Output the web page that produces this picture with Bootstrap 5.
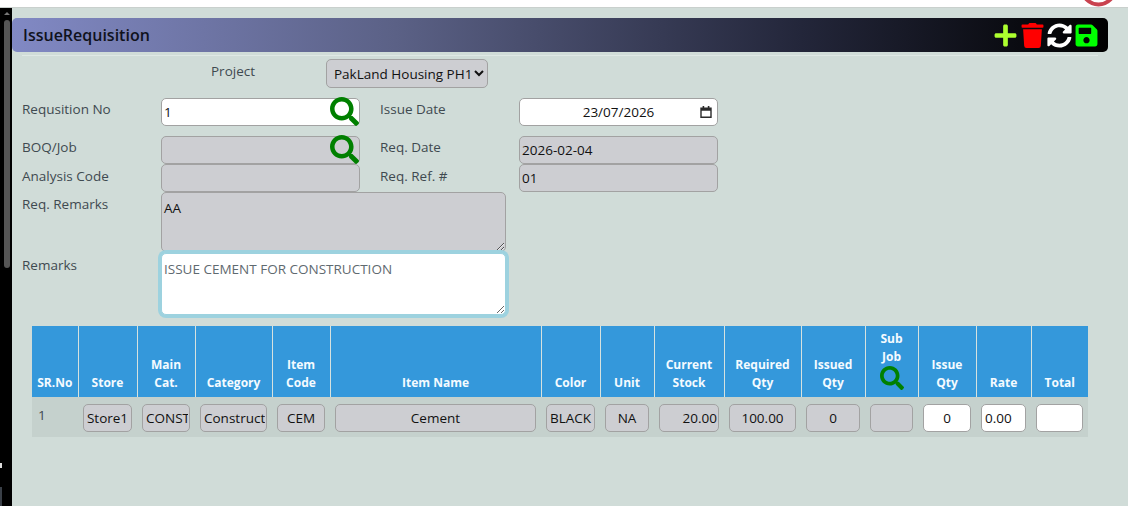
<!DOCTYPE html>
<html lang="en">
<head>
    <meta charset="UTF-8">
    <meta name="viewport" content="width=device-width, initial-scale=1.0">
    <title>Issue Requisition</title>
    <link href="https://cdn.jsdelivr.net/npm/bootstrap@5.3.0/dist/css/bootstrap.min.css" rel="stylesheet">
    <style>
        html, body {
            height: 100%;
            overflow: hidden;
        }
        body {
            font-family: "Open Sans", "Noto Sans", sans-serif;
            font-size: 13.5px;
            background: #d0dcd8;
            color: #3f4a50;
        }
        .top-strip {
            height: 8px;
            background: #fff;
            border-bottom: 1px solid #c9d0cd;
            position: relative;
        }
        .top-logo {
            position: absolute;
            left: 1080px;
            top: 0;
            width: 38px;
            height: 7px;
        }
        .page-wrap {
            height: 498px;
        }
        .side-strip {
            width: 12px;
            flex: none;
            background: #000;
            position: relative;
        }
        .side-thumb {
            position: absolute;
            left: 4px;
            top: 12px;
            width: 6px;
            height: 248px;
            border-radius: 3px;
            background: #555;
        }
        .side-arrow {
            position: absolute;
            left: 4px;
            top: 4px;
            border: 3px solid transparent;
            border-top: 0;
            border-bottom: 3px solid #777;
        }
        .side-foot {
            position: absolute;
            left: 0;
            bottom: 0;
            width: 2px;
            height: 19px;
            background: #3a4048;
        }
        .side-mark {
            position: absolute;
            left: 0;
            top: 455px;
            width: 2px;
            height: 5px;
            background: #ddd;
        }
        .main-area {
            flex: 1;
            min-width: 0;
        }
        .title-bar {
            margin: 10px 20px 0 0;
            height: 34px;
            padding: 0 9px 0 11px;
            background: linear-gradient(90deg, #8189c4 0%, #5b6186 35%, #23263a 72%, #000 100%);
            border-radius: 5px;
        }
        .title-text {
            font-size: 16px;
            font-weight: 600;
            color: #10121c;
        }
        .title-rule {
            height: 1px;
            margin: 3px 30px 0 10px;
            background: #dfe8e5;
        }
        .tool-set {
            gap: 2px;
        }
        .tool-set svg {
            display: block;
            width: 25px;
            height: 25px;
        }
        .form-area {
            padding: 3px 0 0 10px;
        }
        .field-row {
            display: flex;
        }
        .row-project {
            height: 39px;
        }
        .row-req {
            height: 38px;
        }
        .row-boq {
            height: 28px;
        }
        .row-code {
            height: 28px;
        }
        .row-remark {
            height: 61px;
        }
        .lbl-first {
            width: 139px;
            flex: none;
            padding-top: 2px;
        }
        .lbl-second {
            width: 139px;
            margin-left: 20px;
            flex: none;
            padding-top: 2px;
        }
        .row-req .lbl-first, .row-req .lbl-second, .row-boq .lbl-first, .row-boq .lbl-second {
            padding-top: 1px;
        }
        .lbl-project {
            width: 115px;
            margin-left: 189px;
            flex: none;
            padding-top: 2px;
        }
        .box-wrap {
            position: relative;
            width: 199px;
            flex: none;
        }
        .fld {
            display: block;
            width: 199px;
            height: 28px;
            padding: 0 2px;
            font-size: 13.5px;
            color: #111;
            background: #cdced2;
            border: 1px solid #a2a2a2;
            border-radius: 5px;
            font-family: inherit;
            outline: none;
        }
        .fld-white {
            background: #fff;
        }
        .fld-date {
            text-align: center;
        }
        .fld-select {
            width: 162px;
            height: 29px;
            padding: 0 0 0 3px;
        }
        .fld-area {
            width: 345px;
            height: 60px;
            padding: 5px 2px 2px;
            margin: 0;
            resize: vertical;
        }
        .fld-focus {
            height: 62px;
            background: #fff;
            color: #5f6a70;
            border-color: #9dd2df;
            box-shadow: 0 0 0 3px #9dd2df;
        }
        .look-up {
            position: absolute;
            right: 1px;
            top: -1px;
            width: 29px;
            height: 29px;
        }
        .date-icon {
            position: absolute;
            right: 6px;
            top: 8px;
            width: 12px;
            height: 12px;
        }
        .grid-wrap {
            margin: 11px 0 0 20px;
            width: 1056px;
        }
        .req-table {
            width: 1056px;
            table-layout: fixed;
            border-collapse: collapse;
            margin: 0;
        }
        .wd-46 { width: 46px; }
        .wd-53 { width: 53px; }
        .wd-54 { width: 54px; }
        .wd-55 { width: 55px; }
        .wd-57 { width: 57px; }
        .wd-58 { width: 58px; }
        .wd-59 { width: 59px; }
        .wd-64 { width: 64px; }
        .wd-70 { width: 70px; }
        .wd-77 { width: 77px; }
        .wd-211 { width: 211px; }
        .req-table th {
            background: #3498db;
            color: #f4fbff;
            font-size: 12px;
            line-height: 18px;
            font-weight: 700;
            text-align: center;
            vertical-align: bottom;
            padding: 4px 0 5px;
            border-left: 1px solid #d6e2df;
            height: 70px;
            overflow: hidden;
        }
        .req-table th:first-child {
            border-left: 0;
        }
        .req-table td {
            background: #c5d1cd;
            height: 40px;
            padding: 7px 5px 0;
            vertical-align: top;
            color: #3f4a50;
        }
        .req-table td:first-child {
            padding: 8px 0 0 6px;
        }
        .cell-fld {
            width: 100%;
            padding: 0 1px;
            text-align: center;
        }
        .cell-end {
            text-align: right;
        }
        .cell-start {
            text-align: left;
            padding-left: 3px;
        }
        .cell-clip {
            padding-right: 7px;
        }
        .sub-look {
            display: block;
            width: 24px;
            height: 24px;
            margin: 0 auto 2px;
        }
    </style>
</head>
<body>
    <div class="top-strip">
        <svg class="top-logo" viewBox="0 0 38 7"><circle cx="18.5" cy="-12" r="16.5" fill="#fff" stroke="#c9434f" stroke-width="4"/></svg>
    </div>
    <div class="page-wrap d-flex">
        <div class="side-strip">
            <span class="side-arrow"></span>
            <span class="side-thumb"></span>
            <span class="side-mark"></span>
            <span class="side-foot"></span>
        </div>
        <div class="main-area">
            <div class="title-bar d-flex align-items-center justify-content-between">
                <span class="title-text">IssueRequisition</span>
                <div class="tool-set d-flex align-items-center">
                    <svg viewBox="0 0 448 512"><path fill="#adff2f" d="M416 208H272V64c0-17.67-14.33-32-32-32h-32c-17.67 0-32 14.33-32 32v144H32c-17.67 0-32 14.33-32 32v32c0 17.67 14.33 32 32 32h144v144c0 17.67 14.33 32 32 32h32c17.67 0 32-14.33 32-32V304h144c17.67 0 32-14.33 32-32v-32c0-17.67-14.33-32-32-32z"/></svg>
                    <svg viewBox="0 0 448 512"><path fill="#ff0000" d="M432 32H312l-9.4-18.7A24 24 0 0 0 281.1 0H166.8a23.72 23.72 0 0 0-21.4 13.3L136 32H16A16 16 0 0 0 0 48v32a16 16 0 0 0 16 16h416a16 16 0 0 0 16-16V48a16 16 0 0 0-16-16zM53.2 467a48 48 0 0 0 47.9 45h245.8a48 48 0 0 0 47.9-45L416 128H32z"/></svg>
                    <svg viewBox="0 0 512 512"><path fill="#fff" d="M370.72 133.28C339.458 104.008 298.888 87.962 255.848 88c-77.458.068-144.328 53.178-162.791 126.85-1.344 5.363-6.122 9.15-11.651 9.15H24.103c-7.498 0-13.194-6.807-11.807-14.176C33.933 94.924 134.813 8 256 8c66.448 0 126.791 26.136 171.315 68.685L463.03 40.97C478.149 25.851 504 36.559 504 57.941V192c0 13.255-10.745 24-24 24H345.941c-21.382 0-32.09-25.851-16.971-40.971l41.75-41.749zM32 296h134.059c21.382 0 32.09 25.851 16.971 40.971l-41.75 41.75c31.262 29.273 71.835 45.319 114.876 45.28 77.418-.07 144.315-53.144 162.787-126.849 1.344-5.363 6.122-9.15 11.651-9.15h57.304c7.498 0 13.194 6.807 11.807 14.176C478.067 417.076 377.187 504 256 504c-66.448 0-126.791-26.136-171.315-68.685L48.97 471.03C33.851 486.149 8 475.441 8 454.059V320c0-13.255 10.745-24 24-24z"/></svg>
                    <svg viewBox="0 0 448 512"><path fill="#00ff00" d="M433.941 129.941l-83.882-83.882A48 48 0 0 0 316.118 32H48C21.49 32 0 53.49 0 80v352c0 26.51 21.49 48 48 48h352c26.51 0 48-21.49 48-48V163.882a48 48 0 0 0-14.059-33.941zM224 416c-35.346 0-64-28.654-64-64 0-35.346 28.654-64 64-64s64 28.654 64 64c0 35.346-28.654 64-64 64zm96-304.52V212c0 6.627-5.373 12-12 12H76c-6.627 0-12-5.373-12-12V108c0-6.627 5.373-12 12-12h228.52c3.183 0 6.235 1.264 8.485 3.515l3.48 3.48A11.996 11.996 0 0 1 320 111.48z"/></svg>
                </div>
            </div>
            <div class="title-rule"></div>

            <div class="form-area">
                <div class="field-row row-project">
                    <div class="lbl-project">Project</div>
                    <select class="fld fld-select"><option>PakLand Housing PH1</option></select>
                </div>
                <div class="field-row row-req">
                    <div class="lbl-first">Requsition No</div>
                    <div class="box-wrap">
                        <input class="fld fld-white" type="text" value="1">
                        <svg class="look-up" viewBox="0 0 512 512"><path fill="#008000" d="M505 442.7L405.3 343c-4.5-4.5-10.6-7-17-7H372c27.6-35.3 44-79.7 44-128C416 93.1 322.9 0 208 0S0 93.1 0 208s93.1 208 208 208c48.3 0 92.7-16.4 128-44v16.3c0 6.4 2.5 12.5 7 17l99.7 99.7c9.4 9.4 24.6 9.4 33.9 0l28.3-28.3c9.4-9.4 9.4-24.6.1-34zM208 336c-70.7 0-128-57.2-128-128 0-70.7 57.2-128 128-128 70.7 0 128 57.2 128 128 0 70.7-57.2 128-128 128z"/></svg>
                    </div>
                    <div class="lbl-second">Issue Date</div>
                    <div class="box-wrap">
                        <input class="fld fld-white fld-date" type="text" value="23/07/2026">
                        <svg class="date-icon" viewBox="0 0 12 12"><path fill="none" stroke="#2b2b2b" stroke-width="1.4" d="M1 2.2h10v9H1z"/><path fill="#2b2b2b" d="M1 2h10v2.8H1zM2.6 0h1.6v2H2.6zM7.8 0h1.6v2H7.8z"/></svg>
                    </div>
                </div>
                <div class="field-row row-boq">
                    <div class="lbl-first">BOQ/Job</div>
                    <div class="box-wrap">
                        <input class="fld" type="text" disabled>
                        <svg class="look-up" viewBox="0 0 512 512"><path fill="#008000" d="M505 442.7L405.3 343c-4.5-4.5-10.6-7-17-7H372c27.6-35.3 44-79.7 44-128C416 93.1 322.9 0 208 0S0 93.1 0 208s93.1 208 208 208c48.3 0 92.7-16.4 128-44v16.3c0 6.4 2.5 12.5 7 17l99.7 99.7c9.4 9.4 24.6 9.4 33.9 0l28.3-28.3c9.4-9.4 9.4-24.6.1-34zM208 336c-70.7 0-128-57.2-128-128 0-70.7 57.2-128 128-128 70.7 0 128 57.2 128 128 0 70.7-57.2 128-128 128z"/></svg>
                    </div>
                    <div class="lbl-second">Req. Date</div>
                    <input class="fld" type="text" value="2026-02-04" readonly>
                </div>
                <div class="field-row row-code">
                    <div class="lbl-first">Analysis Code</div>
                    <div class="box-wrap"><input class="fld" type="text" readonly></div>
                    <div class="lbl-second">Req. Ref. #</div>
                    <input class="fld" type="text" value="01" readonly>
                </div>
                <div class="field-row row-remark">
                    <div class="lbl-first">Req. Remarks</div>
                    <textarea class="fld fld-area" readonly>AA</textarea>
                </div>
                <div class="field-row">
                    <div class="lbl-first">Remarks</div>
                    <textarea class="fld fld-area fld-focus">ISSUE CEMENT FOR CONSTRUCTION</textarea>
                </div>
            </div>

            <div class="grid-wrap">
                <table class="req-table">
                    <colgroup>
                        <col class="wd-46"><col class="wd-59"><col class="wd-58"><col class="wd-77"><col class="wd-58"><col class="wd-211"><col class="wd-59"><col class="wd-54"><col class="wd-70"><col class="wd-77"><col class="wd-64"><col class="wd-53"><col class="wd-58"><col class="wd-55"><col class="wd-57">
                    </colgroup>
                    <thead>
                        <tr>
                            <th>SR.No</th><th>Store</th><th>Main<br>Cat.</th><th>Category</th><th>Item<br>Code</th><th>Item Name</th><th>Color</th><th>Unit</th><th>Current<br>Stock</th><th>Required<br>Qty</th><th>Issued<br>Qty</th>
                            <th>Sub<br>Job<svg class="sub-look" viewBox="0 0 512 512"><path fill="#008000" d="M505 442.7L405.3 343c-4.5-4.5-10.6-7-17-7H372c27.6-35.3 44-79.7 44-128C416 93.1 322.9 0 208 0S0 93.1 0 208s93.1 208 208 208c48.3 0 92.7-16.4 128-44v16.3c0 6.4 2.5 12.5 7 17l99.7 99.7c9.4 9.4 24.6 9.4 33.9 0l28.3-28.3c9.4-9.4 9.4-24.6.1-34zM208 336c-70.7 0-128-57.2-128-128 0-70.7 57.2-128 128-128 70.7 0 128 57.2 128 128 0 70.7-57.2 128-128 128z"/></svg></th>
                            <th>Issue<br>Qty</th><th>Rate</th><th>Total</th>
                        </tr>
                    </thead>
                    <tbody>
                        <tr>
                            <td>1</td>
                            <td><input class="fld cell-fld" value="Store1" readonly></td>
                            <td><input class="fld cell-fld cell-start" value="CONST" readonly></td>
                            <td><input class="fld cell-fld cell-start" value="Construction" readonly></td>
                            <td><input class="fld cell-fld" value="CEM" readonly></td>
                            <td><input class="fld cell-fld" value="Cement" readonly></td>
                            <td><input class="fld cell-fld" value="BLACK" readonly></td>
                            <td><input class="fld cell-fld" value="NA" readonly></td>
                            <td><input class="fld cell-fld cell-end" value="20.00" readonly></td>
                            <td><input class="fld cell-fld" value="100.00" readonly></td>
                            <td><input class="fld cell-fld" value="0" readonly></td>
                            <td><input class="fld cell-fld" readonly></td>
                            <td><input class="fld fld-white cell-fld" value="0"></td>
                            <td><input class="fld fld-white cell-fld cell-start cell-clip" value="0.00"></td>
                            <td><input class="fld fld-white cell-fld"></td>
                        </tr>
                    </tbody>
                </table>
            </div>
        </div>
    </div>
    <script src="https://cdn.jsdelivr.net/npm/bootstrap@5.3.0/dist/js/bootstrap.bundle.min.js"></script>
</body>
</html>
